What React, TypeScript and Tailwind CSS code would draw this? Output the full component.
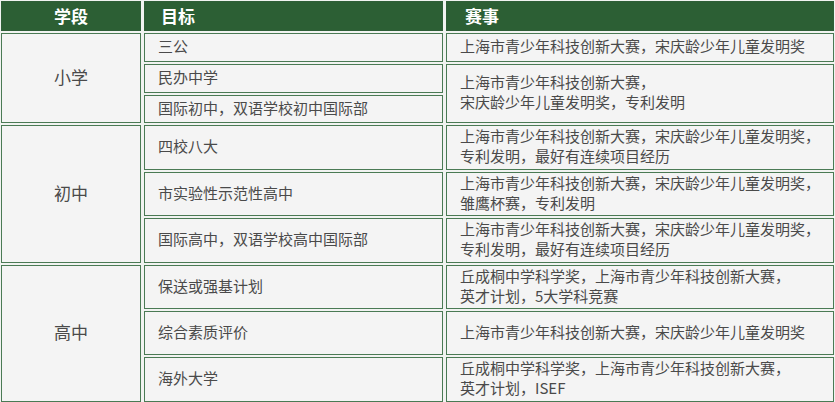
import React from "react";

type Cell = {
  text: React.ReactNode;
  col: string;
  row: string;
  center?: boolean;
};

const font = { fontFamily: '"Noto Sans CJK SC", "Noto Sans", sans-serif' };

const cells: Cell[] = [
  { text: "小学", col: "col-start-1", row: "row-start-2 row-span-3", center: true },
  { text: "三公", col: "col-start-2", row: "row-start-2" },
  { text: "民办中学", col: "col-start-2", row: "row-start-3" },
  { text: "国际初中，双语学校初中国际部", col: "col-start-2", row: "row-start-4" },
  { text: "上海市青少年科技创新大赛，宋庆龄少年儿童发明奖", col: "col-start-3", row: "row-start-2" },
  {
    text: (
      <>
        上海市青少年科技创新大赛，
        <br />
        宋庆龄少年儿童发明奖，专利发明
      </>
    ),
    col: "col-start-3",
    row: "row-start-3 row-span-2",
  },

  { text: "初中", col: "col-start-1", row: "row-start-5 row-span-3", center: true },
  { text: "四校八大", col: "col-start-2", row: "row-start-5" },
  { text: "市实验性示范性高中", col: "col-start-2", row: "row-start-6" },
  { text: "国际高中，双语学校高中国际部", col: "col-start-2", row: "row-start-7" },
  {
    text: (
      <>
        上海市青少年科技创新大赛，宋庆龄少年儿童发明奖，
        <br />
        专利发明，最好有连续项目经历
      </>
    ),
    col: "col-start-3",
    row: "row-start-5",
  },
  {
    text: (
      <>
        上海市青少年科技创新大赛，宋庆龄少年儿童发明奖，
        <br />
        雏鹰杯赛，专利发明
      </>
    ),
    col: "col-start-3",
    row: "row-start-6",
  },
  {
    text: (
      <>
        上海市青少年科技创新大赛，宋庆龄少年儿童发明奖，
        <br />
        专利发明，最好有连续项目经历
      </>
    ),
    col: "col-start-3",
    row: "row-start-7",
  },

  { text: "高中", col: "col-start-1", row: "row-start-8 row-span-3", center: true },
  { text: "保送或强基计划", col: "col-start-2", row: "row-start-8" },
  { text: "综合素质评价", col: "col-start-2", row: "row-start-9" },
  { text: "海外大学", col: "col-start-2", row: "row-start-10" },
  {
    text: (
      <>
        丘成桐中学科学奖，上海市青少年科技创新大赛，
        <br />
        英才计划，5大学科竞赛
      </>
    ),
    col: "col-start-3",
    row: "row-start-8",
  },
  { text: "上海市青少年科技创新大赛，宋庆龄少年儿童发明奖", col: "col-start-3", row: "row-start-9" },
  {
    text: (
      <>
        丘成桐中学科学奖，上海市青少年科技创新大赛，
        <br />
        英才计划，ISEF
      </>
    ),
    col: "col-start-3",
    row: "row-start-10",
  },
];

export default function App() {
  return (
    <div className="h-[402px] w-[835px] overflow-hidden bg-[#f1f3f1] p-px" style={font}>
      <div className="grid grid-cols-[140px_299px_1fr] grid-rows-[30px_29px_29px_28px_45px_44px_45px_44px_44px_45px] gap-x-[3px] gap-y-[2px]">
        <div className="col-start-1 row-start-1 flex items-center justify-center border border-[#2f5e37] bg-[#2c5f34] pb-px text-[17px] font-bold text-white">
          学段
        </div>
        <div className="col-start-2 row-start-1 flex items-center border border-[#2f5e37] bg-[#2c5f34] pb-px pl-4 text-[17px] font-bold text-white">
          目标
        </div>
        <div className="col-start-3 row-start-1 flex items-center border border-[#2f5e37] bg-[#2c5f34] pb-px pl-[18px] text-[17px] font-bold text-white">
          赛事
        </div>

        {cells.map((c, i) => (
          <div
            key={i}
            className={`${c.col} ${c.row} flex items-center border border-[#4a7a54] bg-[#f4f4f4] pb-[3px] text-[#4a4a4a] ${
              c.center ? "justify-center text-[17px]" : "pl-[13px] text-[15px] leading-[20px]"
            }`}
          >
            <div>{c.text}</div>
          </div>
        ))}
      </div>
    </div>
  );
}
